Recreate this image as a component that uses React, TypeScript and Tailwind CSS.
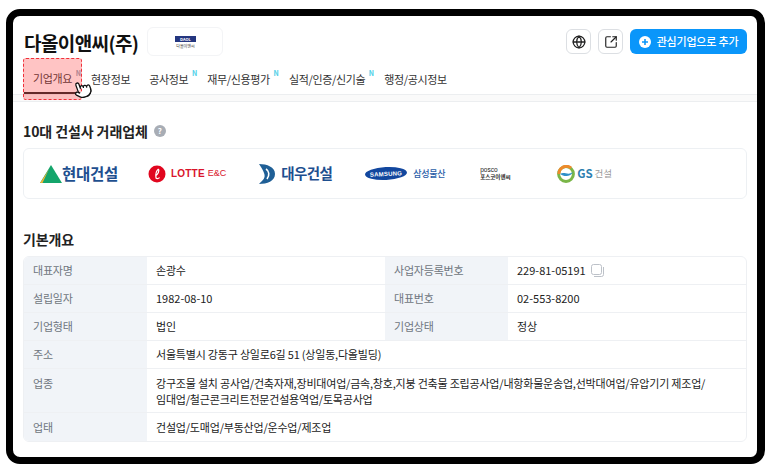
import { Globe, SquareArrowOutUpRight, Pointer } from "lucide-react";

const font = { fontFamily: '"Noto Sans CJK KR", "Noto Sans", sans-serif' };

const tabs = [
  { label: "기업개요", badge: true, active: true },
  { label: "현장정보" },
  { label: "공사정보", badge: true },
  { label: "재무/신용평가", badge: true },
  { label: "실적/인증/신기술", badge: true },
  { label: "행정/공시정보" },
];

function Tab({ label, badge, active }: { label: string; badge?: boolean; active?: boolean }) {
  return (
    <div
      className={`relative flex h-[36px] items-center px-[9.5px] pt-[6px] text-[11px] tracking-[-0.35px] text-[#333] ${
        active ? "border-b-2 border-[#222] text-[#222]" : ""
      }`}
    >
      {label}
      {badge && (
        <span
          className={`absolute right-[1px] top-[12px] text-[7px] font-bold leading-none ${
            active ? "text-[#8fa3b5]" : "text-[#4fd0e8]"
          }`}
        >
          N
        </span>
      )}
    </div>
  );
}

function Logos() {
  return (
    <div className="mt-[7px] flex h-[51px] items-center rounded-md border border-[#edf0f3] pl-[16px]">
      {/* 현대건설 */}
      <svg width="22" height="18" viewBox="0 0 22 18" className="shrink-0">
        <path d="M11 0 L22 18 H0 Z" fill="#14a56b" />
        <path d="M6 9 L9 4 L2.5 18 H0 Z" fill="#f2b233" />
      </svg>
      <span className="w-[58px] text-[15.5px] font-bold leading-none tracking-[-0.3px] text-[#1e4f8f]">현대건설</span>

      {/* 롯데 */}
      <svg width="18" height="18" viewBox="0 0 18 18" className="ml-[28px] shrink-0">
        <circle cx="9" cy="9" r="8.5" fill="#e1061f" />
        <path d="M10.5 4 C8 6 7.5 10 8 13 C9 14 11 13.5 11.5 12.5 M10.5 4 C11.5 6 10 9 8 10.5" fill="none" stroke="#fff" strokeWidth="1.2" />
      </svg>
      <span className="ml-[5px] text-[10px] font-bold leading-none tracking-[0.2px] text-[#d9142b]" style={{ fontFamily: '"Liberation Sans", sans-serif' }}>
        LOTTE
      </span>
      <span className="ml-[3px] text-[9px] leading-none text-[#d9142b]" style={{ fontFamily: '"Liberation Sans", sans-serif' }}>
        E&amp;C
      </span>

      {/* 대우 */}
      <svg width="17" height="20" viewBox="0 0 17 20" className="ml-[32px] shrink-0">
        <path d="M1 0 C9 0 17 3 17 10 C17 17 9 20 1 20 C5 16 8 14 6 9 C5 6 3 3 1 0 Z" fill="#1f5f96" />
        <path d="M8 5 C11 7 12 11 9 15" fill="none" stroke="#fff" strokeWidth="1.6" />
      </svg>
      <span className="ml-[6px] text-[14.5px] font-bold leading-none tracking-[-0.6px] text-[#1e4f8f]">대우건설</span>

      {/* 삼성물산 */}
      <div className="ml-[33px] flex h-[13px] w-[42px] -rotate-3 items-center justify-center rounded-[50%] bg-[#12479e]">
        <span className="text-[6px] font-bold leading-none tracking-[0.2px] text-white" style={{ fontFamily: '"Liberation Sans", sans-serif' }}>
          SAMSUNG
        </span>
      </div>
      <span className="ml-[6px] text-[9px] font-medium leading-none tracking-[-0.3px] text-[#2a5ea8]">삼성물산</span>

      {/* 포스코이앤씨 */}
      <div className="ml-[35px] flex w-[32px] flex-col gap-[1px] leading-none text-[#222]">
        <span className="text-[6.5px] leading-none" style={{ fontFamily: '"Liberation Sans", sans-serif' }}>
          posco
        </span>
        <span className="text-[5.5px] font-bold leading-none">포스코이앤씨</span>
      </div>

      {/* GS건설 */}
      <svg width="18" height="18" viewBox="0 0 18 18" className="ml-[45px] shrink-0">
        <circle cx="9" cy="9" r="7.4" fill="none" stroke="#7ab648" strokeWidth="3" />
        <path d="M2 9 A7.4 7.4 0 0 1 14 3" fill="none" stroke="#ee8a2b" strokeWidth="3" />
        <path d="M3 9 C7 6 11 11 16 7 C14 12 7 12 3 9 Z" fill="#2f8fc9" />
      </svg>
      <span className="ml-[2px] text-[11.5px] font-bold leading-none text-[#2d7fb0]">GS</span>
      <span className="ml-[2px] text-[9.5px] leading-none text-[#9a9a9a]">건설</span>
    </div>
  );
}

function Label({ children, className = "" }: { children: string; className?: string }) {
  return <div className={`flex items-center bg-[#f1f4f8] pl-[9px] tracking-[-0.2px] text-[#6f7680] ${className}`}>{children}</div>;
}

function Value({ children, className = "" }: { children: React.ReactNode; className?: string }) {
  return <div className={`flex items-center pl-[9px] text-[#222] ${className}`}>{children}</div>;
}

function CopyIcon() {
  return (
    <svg width="13" height="13" viewBox="0 0 13 13" className="ml-[5px]" fill="none" stroke="#bcc1c8" strokeWidth="1">
      <rect x="0.5" y="0.5" width="10" height="10" rx="2" />
      <path d="M12.5 3 V10.5 A2 2 0 0 1 10.5 12.5 H3" />
    </svg>
  );
}

function InfoTable() {
  const line = "border-b border-[#eef0f3]";
  const ko = "tracking-[-0.2px]";
  return (
    <div className="mt-[7px] grid grid-cols-[123px_238px_123px_1fr] grid-rows-[28px_28px_28px_28px_44px_28px] overflow-hidden rounded-md border border-[#eef0f3] text-[11px]">
      <Label className={line}>대표자명</Label>
      <Value className={`${ko} ${line}`}>손광수</Value>
      <Label className={line}>사업자등록번호</Label>
      <Value className={line}>
        229-81-05191
        <CopyIcon />
      </Value>

      <Label className={line}>설립일자</Label>
      <Value className={line}>1982-08-10</Value>
      <Label className={line}>대표번호</Label>
      <Value className={line}>02-553-8200</Value>

      <Label className={line}>기업형태</Label>
      <Value className={`${ko} ${line}`}>법인</Value>
      <Label className={line}>기업상태</Label>
      <Value className={`${ko} ${line}`}>정상</Value>

      <Label className={line}>주소</Label>
      <Value className={`col-span-3 ${ko} ${line}`}>서울특별시 강동구 상일로6길 51 (상일동,다올빌딩)</Value>

      <Label className={`items-start pt-[6px] ${line}`}>업종</Label>
      <Value className={`col-span-3 leading-[16px] ${ko} ${line}`}>
        <p>
          강구조물 설치 공사업/건축자재,장비대여업/금속,창호,지붕 건축물 조립공사업/내항화물운송업,선박대여업/유압기기 제조업/
          <br />
          임대업/철근콘크리트전문건설용역업/토목공사업
        </p>
      </Value>

      <Label>업태</Label>
      <Value className={`col-span-3 ${ko}`}>건설업/도매업/부동산업/운수업/제조업</Value>
    </div>
  );
}

export default function App() {
  return (
    <div className="h-[472px] w-[773px] overflow-hidden bg-white pl-[6px] pt-[9px]" style={font}>
      <div className="h-[455px] w-[759px] overflow-hidden rounded-[14px] border-[7px] border-r-[8px] border-black bg-white">
        {/* header */}
        <div className="flex h-[40px] items-start pl-[11px] pr-[10px] pt-[11px]">
          <h1 className="mt-[1px] h-[29px] text-[19px] font-bold leading-[29px] tracking-[-0.6px] text-[#111]">다올이앤씨(주)</h1>
          <div className="ml-[9px] flex h-[29px] w-[76px] flex-col items-center justify-center gap-[2px] rounded-md border border-[#f3f4f6]">
            <span className="flex h-[6px] w-[21px] items-center justify-center bg-[#24367f] text-[4px] font-bold leading-none text-white">DAOL</span>
            <span className="text-[4px] leading-none text-[#333]">다올이앤씨</span>
          </div>
          <div className="mt-[2px] ml-auto flex gap-[7px]">
            <button className="flex h-[25px] w-[25px] items-center justify-center rounded-md border border-[#dcdfe3] bg-white">
              <Globe size={14} strokeWidth={2.2} color="#222" />
            </button>
            <button className="flex h-[25px] w-[25px] items-center justify-center rounded-md border border-[#dcdfe3] bg-white">
              <SquareArrowOutUpRight size={14} strokeWidth={2} color="#222" />
            </button>
            <button className="flex h-[25px] w-[117px] items-center justify-center gap-[6px] rounded-md bg-[#0a96fa] text-[11px] font-medium tracking-[-0.2px] text-white">
              <svg width="12" height="12" viewBox="0 0 12 12">
                <circle cx="6" cy="6" r="6" fill="#fff" />
                <path d="M6 3 V9 M3 6 H9" stroke="#0a96fa" strokeWidth="1.6" />
              </svg>
              관심기업으로 추가
            </button>
          </div>
        </div>

        {/* tabs */}
        <div className="relative mt-[2px]">
          <div className="flex pl-[10.5px]">
            {tabs.map((t) => (
              <Tab key={t.label} {...t} />
            ))}
          </div>
          <div className="h-[8px] border-y border-[#eceef0] bg-[#fafafa]" />

          {/* red inspection highlight and cursor */}
          <div className="absolute left-[10px] top-0 h-[42px] w-[59px] rounded-[3px] border border-dashed border-[#f0303a] bg-[#ff3b3b]/30" />
          <Pointer size={19} fill="#fff" strokeWidth={1.6} color="#111" className="absolute left-[60px] top-[22px] -rotate-[20deg]" />
        </div>

        {/* content */}
        <div className="px-[10px]">
          <div className="mt-[19px] flex h-[20px] items-center gap-[6px]">
            <h2 className="text-[14px] font-bold tracking-[-0.1px] text-[#222]">10대 건설사 거래업체</h2>
            <span className="flex h-[12px] w-[12px] items-center justify-center rounded-full bg-[#a8adb5] text-[8px] font-bold leading-none text-white">?</span>
          </div>
          <Logos />

          <h2 className="mt-[30px] flex h-[20px] items-center text-[14px] font-bold tracking-[-0.1px] text-[#222]">기본개요</h2>
          <div className="mt-[2px]">
            <InfoTable />
          </div>
        </div>
      </div>
    </div>
  );
}
